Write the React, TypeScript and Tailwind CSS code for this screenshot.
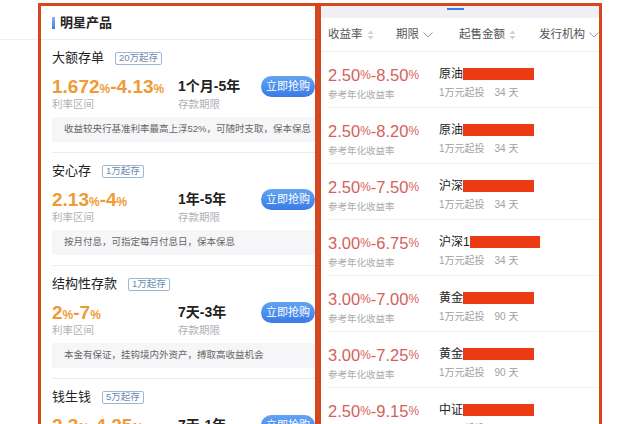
import React from 'react'

const products = [
	{ name: '大额存单', tag: '20万起存', lo: '1.672', hi: '4.13', term: '1个月-5年', note: '收益较央行基准利率最高上浮52%，可随时支取，保本保息' },
	{ name: '安心存', tag: '1万起存', lo: '2.13', hi: '4', term: '1年-5年', note: '按月付息，可指定每月付息日，保本保息' },
	{ name: '结构性存款', tag: '1万起存', lo: '2', hi: '7', term: '7天-3年', note: '本金有保证，挂钩境内外资产，搏取高收益机会' },
	{ name: '钱生钱', tag: '5万起存', lo: '2.3', hi: '4.25', term: '7天-1年', note: '灵活申赎，收益稳健' },
]

const funds = [
	{ lo: '2.50', hi: '8.50', name: '原油', days: '34', bar: 'w-[71px]' },
	{ lo: '2.50', hi: '8.20', name: '原油', days: '34', bar: 'w-[71px]' },
	{ lo: '2.50', hi: '7.50', name: '沪深', days: '34', bar: 'w-[71px]' },
	{ lo: '3.00', hi: '6.75', name: '沪深1', days: '34', bar: 'w-[70px]' },
	{ lo: '3.00', hi: '7.00', name: '黄金', days: '90', bar: 'w-[71px]' },
	{ lo: '3.00', hi: '7.25', name: '黄金', days: '90', bar: 'w-[71px]' },
	{ lo: '2.50', hi: '9.15', name: '中证', days: '34', bar: 'w-[71px]' },
]

const SortIcon = () => (
	<svg width="7" height="10" viewBox="0 0 7 10" className="ml-[4px] shrink-0">
		<path d="M3.5 0.5 L6.5 4 L0.5 4 Z" fill="#cfcfd4" />
		<path d="M3.5 9.5 L6.5 6 L0.5 6 Z" fill="#cfcfd4" />
	</svg>
)

const Chevron = () => (
	<svg width="10" height="6" viewBox="0 0 10 6" className="ml-[4px] shrink-0">
		<path d="M0.5 0.5 L5 5 L9.5 0.5" fill="none" stroke="#9a9aa2" strokeWidth="1" />
	</svg>
)

const App: React.FC = () => {
	return (
		<div className="w-[640px] h-[424px] overflow-hidden bg-white flex font-['Liberation_Sans','Noto_Sans_CJK_SC',sans-serif]">
			<div className="w-[38px] shrink-0">
				<div className="h-[40px] border-b border-[#f0f0f2]" />
			</div>

			{/* left: star products */}
			<div className="w-[280px] shrink-0 mt-[3px] border-[3px] border-b-0 border-[#d4471f] h-[440px] overflow-hidden">
				<div className="h-[34px] flex items-center pl-[11px] border-b border-[#ebebee]">
					<div className="w-[3px] h-[12px] bg-gradient-to-b from-[#8ab4f4] to-[#3b78e7]" />
					<span className="ml-[5px] text-[13px] font-semibold text-[#222]">明星产品</span>
				</div>
				{products.map((p, i) => (
					<div key={i} className="ml-[11px] h-[113px] border-b border-[#ebebee] pt-[8px]">
						<div className="flex items-center h-[20px]">
							<span className="text-[13px] text-[#222]">{p.name}</span>
							<span className="ml-[11px] h-[13px] px-[3px] flex items-center border border-[#9cb8d6] rounded-[2px] text-[9.5px] leading-none text-[#6a8ab0]">
								{p.tag}
							</span>
						</div>
						<div className="flex items-center h-[24px] mt-[6px]">
							<div className="w-[126px] text-[19px] font-bold text-[#ef9a36] leading-none whitespace-nowrap">
								{p.lo}
								<span className="text-[12px]">%</span>-{p.hi}
								<span className="text-[12px]">%</span>
							</div>
							<div className="flex-1 text-[14px] font-semibold text-[#222]">{p.term}</div>
							<div className="w-[54px] h-[21px] rounded-full bg-gradient-to-b from-[#62a4f2] to-[#3a7ae6] flex items-center justify-center text-[11px] text-white">
								立即抢购
							</div>
						</div>
						<div className="flex h-[12px] text-[10.5px] leading-[12px] text-[#b0b0b6]">
							<span className="w-[126px]">利率区间</span>
							<span>存款期限</span>
						</div>
						<div className="mt-[7px] h-[25px] bg-[#f6f6f8] rounded-[2px] flex items-center pl-[12px] text-[9.5px] text-[#666]">
							{p.note}
						</div>
					</div>
				))}
			</div>

			{/* right: fund list */}
			<div className="w-[284px] shrink-0 mt-[3px] border-[3px] border-b-0 border-[#d4471f] h-[440px] overflow-hidden">
				<div className="h-[12px] bg-[#efeff4] relative">
					<div className="absolute left-[126px] top-[2px] w-[17px] h-[2px] bg-[#3d7de0]" />
				</div>
				<div className="h-[34px] flex items-center pl-[7px] border-b border-[#eeeef0] text-[11.5px] text-[#555] whitespace-nowrap">
					<div className="w-[68px] flex items-center">收益率<SortIcon /></div>
					<div className="w-[63px] flex items-center">期限<Chevron /></div>
					<div className="w-[80px] flex items-center">起售金额<SortIcon /></div>
					<div className="flex items-center">发行机构<Chevron /></div>
				</div>
				{funds.map((f, i) => (
					<div key={i} className="ml-[6px] h-[56px] border-b border-[#f2f2f4] flex pt-[13px]">
						<div className="w-[112px] pl-[1px]">
							<div className="h-[20px] flex items-center text-[16.5px] text-[#d4615a] leading-none whitespace-nowrap">
								{f.lo}
								<span className="text-[12px]">%</span>-{f.hi}
								<span className="text-[12px]">%</span>
							</div>
							<div className="mt-[3px] text-[9.5px] leading-[14px] text-[#aaa]">参考年化收益率</div>
						</div>
						<div>
							<div className="h-[18px] flex items-center text-[12px] text-[#222]">
								{f.name}
								<div className={`${f.bar} h-[12px] bg-[#ea3b14]`} />
							</div>
							<div className="mt-[3px] text-[10px] leading-[14px] text-[#a0a0a6] flex">
								<span>1万元起投</span>
								<span className="ml-[10px]">{f.days} 天</span>
							</div>
						</div>
					</div>
				))}
			</div>
			<div className="flex-1" />
		</div>
	)
}

export default App
